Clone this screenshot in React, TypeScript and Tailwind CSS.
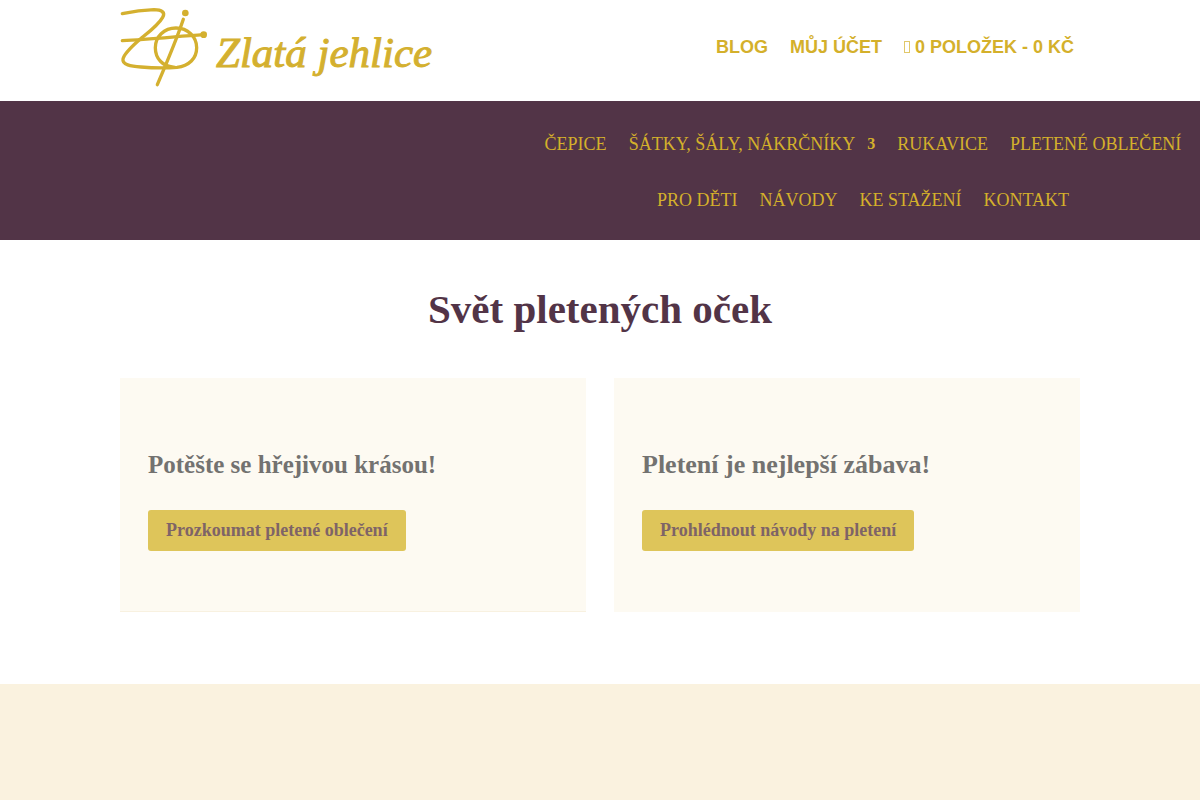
import clsx from "clsx";

const topLinks = [
  { label: "Blog" },
  { label: "Můj účet" },
  { label: "0 položek - 0 Kč", isCart: true },
];

const categories = [
  { label: "Čepice" },
  { label: "Šátky, šály, nákrčníky", hasSubmenu: true },
  { label: "Rukavice" },
  { label: "Pletené oblečení" },
  { label: "Pro děti" },
  { label: "Návody" },
  { label: "Ke stažení" },
  { label: "Kontakt" },
];

const promos = [
  { title: "Potěšte se hřejivou krásou!", action: "Prozkoumat pletené oblečení", underlined: true },
  { title: "Pletení je nejlepší zábava!", action: "Prohlédnout návody na pletení", underlined: false },
];

function Logo() {
  return (
    <a href="#" className="flex items-start gap-2 text-[#d4b02f]">
      <svg viewBox="30 24 264 240" className="w-[88px] h-20" fill="none" stroke="currentColor" strokeWidth="10" strokeLinecap="round" aria-hidden="true">
        <path d="M37 41C70 34 103 30 132 29C155 29 167 37 158 52C145 75 118 95 91 117C69 137 43 159 39 177C36 194 62 199 93 201C130 204 172 204 201 202C237 198 260 175 260 143C260 110 233 84 198 84C162 84 136 110 136 143C136 174 157 201 195 202" />
        <path d="M37 122C120 118 205 109 280 104" />
        <path d="M220 58C199 121 170 189 142 254" />
        <circle cx="226" cy="39" r="10" fill="currentColor" stroke="none" />
        <circle cx="281" cy="104" r="10" fill="currentColor" stroke="none" />
      </svg>
      <span className="mt-5 text-[43px] leading-[50px] italic whitespace-nowrap [-webkit-text-stroke:1px]">Zlatá jehlice</span>
    </a>
  );
}

export default function App() {
  return (
    <div className="flex flex-col min-h-screen bg-white font-['Liberation_Serif',serif]">
      <header>
        <div className="max-w-[960px] h-[101px] mx-auto pt-2 pr-1.5 flex items-start justify-between">
          <Logo />
          <nav className="mt-6 flex gap-[22px] font-['Liberation_Sans',sans-serif] text-lg leading-[30px] font-bold uppercase text-[#d4b02b]">
            {topLinks.map(({ label, isCart }) => (
              <a key={label} href="#" className="flex items-center gap-[5px] whitespace-nowrap">
                {isCart && <span className="w-[6px] h-3 border border-[#d4b02b]/70" aria-hidden="true" />}
                {label}
              </a>
            ))}
          </nav>
        </div>

        <nav className="flex justify-end bg-[#523447] pt-[15px] pb-3 pr-[7px]">
          <ul className="max-w-[660px] flex flex-wrap justify-center">
            {categories.map(({ label, hasSubmenu }) => (
              <li key={label} className="px-[11px]">
                <a href="#" className="flex items-center gap-3 text-lg leading-[56px] uppercase text-[#d4b02b]">
                  {label}
                  {hasSubmenu && <span className="text-base leading-[56px] font-bold">3</span>}
                </a>
              </li>
            ))}
          </ul>
        </nav>
      </header>

      <main className="w-full max-w-[960px] mx-auto pt-11 pb-[72px]">
        <h1 className="text-center text-[41px] leading-[50px] font-bold text-[#523447]">Svět pletených oček</h1>
        <div className="mt-11 grid grid-cols-2 gap-7">
          {promos.map(({ title, action, underlined }) => (
            <section
              key={title}
              className={clsx(
                "h-[234px] px-7 pt-[10px] flex flex-col items-start justify-center gap-[29px] bg-[#fdfaf2]",
                underlined && "border-b border-[#f8f1e0]"
              )}
            >
              <h2 className={clsx("leading-8 font-bold text-[#737270]", underlined ? "text-[25px]" : "text-[26px]")}>{title}</h2>
              <button className="rounded-[3px] bg-[#dec55a] px-[18px] text-lg leading-[41px] font-bold text-[#7e6467]">{action}</button>
            </section>
          ))}
        </div>
      </main>

      <section className="flex-1 bg-[#faf2df]" />
    </div>
  );
}
